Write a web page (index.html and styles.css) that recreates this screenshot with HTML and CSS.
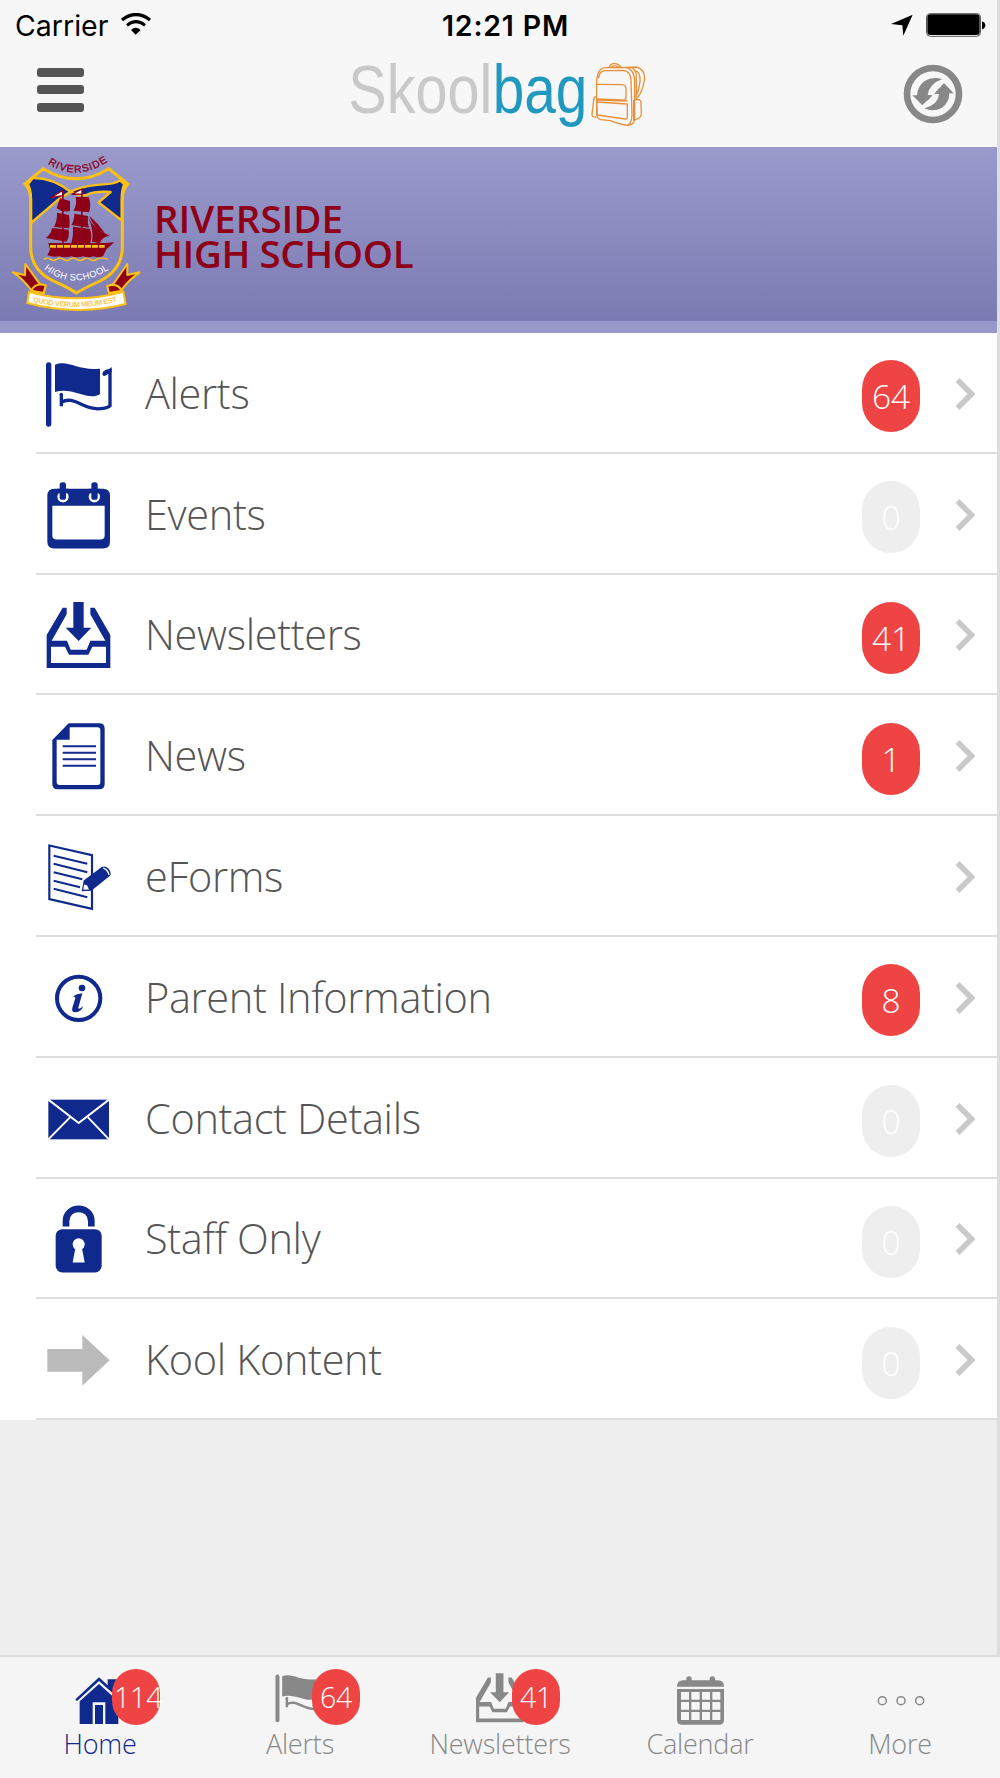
FILE: index.html
```
<!DOCTYPE html>
<html lang="en">
<head>
    <meta charset="UTF-8">
    <meta name="viewport" content="width=device-width, initial-scale=1.0">
    <title>Skoolbag - Riverside High School</title>
    <link rel="stylesheet" href="styles.css">
</head>
<body>

    <div class="screen">

        <header class="header">
            <div class="status">
                <div class="carrier">
                    <span>Carrier</span>
                    <svg width="30" height="22" viewBox="363 38 90 66">
                        <path d="M366 59Q408 26 450 59" fill="none" stroke="#000" stroke-width="10"/>
                        <path d="M381 75Q408 53 435 75" fill="none" stroke="#000" stroke-width="9"/>
                        <path d="M393 89Q407 76 422 89L407 103Z"/>
                    </svg>
                </div>
                <span class="time">12:21 PM</span>
                <div class="power">
                    <svg width="22" height="22" viewBox="1174 42 66 66"><path d="M1174 72L1239 44L1211 107L1208 76Z"/></svg>
                    <svg width="60" height="24" viewBox="1281 38 180 72">
                        <rect x="1282.5" y="40" width="162" height="68" rx="12" fill="#fff" stroke="#555" stroke-width="3"/>
                        <rect x="1285" y="42" width="157" height="62" rx="9"/>
                        <path d="M1449 63Q1459 66 1459 75Q1459 84 1449 87Z"/>
                    </svg>
                </div>
            </div>

            <div class="navbar">
                <div class="menu"><i></i><i></i><i></i></div>

                <svg class="logo" width="305" height="80" viewBox="15 0 915 240">
                    <text class="skool" x="28" y="190" textLength="432" lengthAdjust="spacingAndGlyphs">Skool</text>
                    <text class="bag" x="461" y="190" textLength="284" lengthAdjust="spacingAndGlyphs">bag</text>
                    <g fill="none" stroke="#e8913c" stroke-width="4" stroke-linejoin="round">
                        <path d="M773 145V95Q775 53 800 53L858 52Q884 54 887 90V205Q887 225 866 226Q835 222 815 212L785 209Q772 205 773 185Z"/>
                        <path d="M779 85Q780 62 800 62L852 61Q874 62 876 90L879 195Q878 220 866 226"/>
                        <path d="M812 51Q812 41 827 40Q840 42 847 52M817 51Q827 44 839 51"/>
                        <path d="M858 52L893 51Q917 58 917 87Q910 128 895 143L890 147"/>
                        <path d="M887 62Q905 64 903 95Q899 125 889 143M879 53Q892 61 892 80V140"/>
                        <path d="M773 103L850 104Q860 105 861 115V145Q859 151 850 150L773 147"/>
                        <path d="M773 150L865 153M773 156L865 162V203Q864 208 858 207L775 195Z"/>
                        <path d="M772 140Q765 140 764 150L759 194Q758 201 772 201"/>
                        <path d="M887 150Q900 144 906 155L907 192Q907 205 886 210M884 150V212"/>
                    </g>
                </svg>

                <svg class="refresh" width="60" height="60" viewBox="1208 193 180 180" fill="#888">
                    <circle cx="1298" cy="283" r="78" fill="none" stroke="#888" stroke-width="20"/>
                    <path d="M1325 239Q1297 229 1273 244Q1252 259 1250 287L1236 287L1266 317L1296 287L1282 287Q1286 252 1325 239Z"/>
                    <path d="M1272 326Q1299 338 1325 324Q1347 309 1347 281L1360 281L1331 250L1302 283L1316 283Q1313 315 1272 326Z"/>
                    <path d="M1281 287H1296L1281 304ZM1302 283H1317L1317 265Z"/>
                </svg>
            </div>
        </header>

        <section class="banner">
            <svg class="crest" width="130" height="155" viewBox="36 33 390 465">
                <path id="arcTop" d="M143 56Q229 112 323 50" fill="none"/>
                <path id="arcMid" d="M132 372Q220 441 330 372" fill="none"/>
                <path id="arcLow" d="M98 470Q229 503 360 467" fill="none"/>

                <text class="crest-top"><textPath href="#arcTop" textLength="192">RIVERSIDE</textPath></text>

                <g fill="#0f2a8c" stroke="#fdc013" stroke-width="7" stroke-linejoin="round">
                    <path d="M84 118L98 99Q158 98 211 140L172 166L93 234V160Q93 135 84 118Z"/>
                    <path d="M211 139Q260 120 310 118Q345 117 360 106L373 118Q365 135 365 160V226L296 172L332 141Q290 138 268 146Q245 160 211 139Z"/>
                </g>
                <path d="M75 117L130 71Q228 132 326 71L383 117Q367 135 367 165V305Q367 374 300 408Q252 430 229 444Q205 428 158 407Q92 374 92 305V165Q92 135 75 117Z" fill="none" stroke="#fdc013" stroke-width="9"/>

                <!-- ship -->
                <g fill="#8e0018">
                    <path d="M180 160L210 168V197Q190 205 170 190ZM227 156H266Q275 180 267 202L220 197Q232 180 227 156Z"/>
                    <path d="M171 203L207 210Q211 240 207 250L162 246Q172 226 171 203ZM223 206L264 213Q262 235 267 248L214 240Q223 226 223 206Z"/>
                    <path d="M156 249L206 254Q209 280 198 290L137 279Q154 267 156 249ZM219 245L270 252Q278 275 270 295H214Q221 271 219 245Z"/>
                    <path d="M264 215Q280 253 330 272Q305 275 299 295L276 290Q283 258 264 215ZM268 212Q295 235 315 265Q280 250 268 212Z"/>
                    <path d="M186 140H191V297H186ZM243 135H248V297H243Z"/>
                    <path d="M145 294H315L343 292L320 312L309 333Q295 340 280 334Q265 340 250 334Q230 340 215 334Q195 340 178 334Q160 338 142 331L150 314Z"/>
                </g>
                <path d="M150 304H314" stroke="#fdc013" stroke-width="8" stroke-dasharray="18 3"/>
                <path d="M132 343Q142 336 151 343T170 343T190 343T210 343T230 343T250 343T270 343T290 343T323 342" fill="none" stroke="#fdc013" stroke-width="4"/>
                <path d="M152 158L188 136V152ZM215 148L246 132V147Z" fill="#fff" stroke="#8e0018" stroke-width="4"/>

                <text class="crest-mid"><textPath href="#arcMid" textLength="210">HIGH SCHOOL</textPath></text>

                <g fill="#8e0018" stroke="#fdc013" stroke-width="6" stroke-linejoin="round">
                    <path d="M76 357L120 418L137 422L131 443L95 437Q68 400 39 382L75 391Z"/>
                    <path d="M382 357L340 417L322 424L328 443L362 438Q385 405 419 382L382 390Z"/>
                    <path d="M94 437Q105 412 137 421L131 444ZM365 437Q352 412 322 423L327 444Z"/>
                </g>
                <path d="M87 441Q228 479 370 440L377 477Q229 514 82 474Z" fill="#fff" stroke="#fdc013" stroke-width="6"/>
                <text class="crest-low"><textPath href="#arcLow" textLength="256">QUOD VERUM MEUM EST</textPath></text>
            </svg>
            <h1>RIVERSIDE<br><span>HIGH SCHOOL</span></h1>
        </section>

        <main>
            <ul class="list">
                <li>
                    <svg class="icon" viewBox="132 82 210 210">
                        <g id="flag" fill="currentColor">
                            <rect x="138" y="95" width="16" height="193" rx="8"/>
                            <path d="M165 102C205 86 236 122 300 114V190C268 214 218 168 165 184Z"/>
                            <path d="M184 190V227M184 215C222 192 250 240 301 234Q322 232 330 225V119L315 130" fill="none" stroke="currentColor" stroke-width="10"/>
                            <circle cx="184" cy="191" r="5"/><circle cx="313" cy="130" r="6"/>
                            <path d="M308 125Q315 114 335 115V125L316 133Z"/>
                        </g>
                    </svg>
                    <span class="name">Alerts</span><b class="badge">64</b>
                    <svg class="chevron" viewBox="0 0 20 32"><path d="M2.5 2L16.5 16L2.5 30"/></svg>
                </li>
                <li>
                    <svg class="icon" viewBox="132 444.6 210 210" fill="currentColor">
                        <path fill-rule="evenodd" d="M163 474H309Q330 474 330 495V633Q330 653 309 653H163Q142 653 142 633V495Q142 474 163 474ZM157 525V615Q157 626 170 626H301Q314 626 314 615V525Z"/>
                        <circle cx="189" cy="498" r="17" fill="#fff"/><circle cx="283" cy="498" r="17" fill="#fff"/>
                        <path d="M172 474H206V487H172ZM266 474H300V487H266Z"/>
                        <rect x="179" y="454" width="19" height="53" rx="8"/><rect x="274" y="454" width="19" height="53" rx="8"/>
                    </svg>
                    <span class="name">Events</span><b class="badge zero">0</b>
                    <svg class="chevron" viewBox="0 0 20 32"><path d="M2.5 2L16.5 16L2.5 30"/></svg>
                </li>
                <li>
                    <svg class="icon" viewBox="132 807 210 210">
                        <g id="inbox" fill="currentColor">
                            <path d="M220 816H251V893H274L236 933L197 893H220Z"/>
                            <path fill-rule="evenodd" d="M188 833H200V853L155 932H201L212 959H260L271 932H316L271 853V833H284L331 915V1014H140V915ZM153 950V999H318V950H277L265 974H207L195 950Z"/>
                        </g>
                    </svg>
                    <span class="name">Newsletters</span><b class="badge">41</b>
                    <svg class="chevron" viewBox="0 0 20 32"><path d="M2.5 2L16.5 16L2.5 30"/></svg>
                </li>
                <li>
                    <svg class="icon" viewBox="132 89 210 210" fill="currentColor">
                        <path fill-rule="evenodd" d="M206 99H298Q314 99 314 115V281Q314 297 298 297H173Q157 297 157 281V149ZM209 111V148H170V275Q170 284 179 284H293Q301 284 301 275V120Q301 111 293 111Z"/>
                        <path d="M188 168H288M188 187H288M188 206.500H288M188 226H288" stroke="currentColor" stroke-width="6"/>
                    </svg>
                    <span class="name">News</span><b class="badge">1</b>
                    <svg class="chevron" viewBox="0 0 20 32"><path d="M2.5 2L16.5 16L2.5 30"/></svg>
                </li>
                <li>
                    <svg class="icon" viewBox="132 451.5 210 210">
                        <path d="M148 465L276 494V655L148 626Z" fill="none" stroke="currentColor" stroke-width="6.500"/>
                        <path d="M161 496L262 520M161 520L262 545M161 545L247 566M161 571L240 590M161 595L262 620" stroke="currentColor" stroke-width="6"/>
                        <path d="M251 570L304 530Q315 524 325 534Q336 548 330 556L274 601L245 602Z" fill="currentColor"/>
                        <path d="M252 582L261 584L267 597L250 598Z" fill="#fff"/>
                        <path d="M310 532Q325 540 327 553" fill="none" stroke="#fff" stroke-width="4"/>
                    </svg>
                    <span class="name">eForms</span>
                    <svg class="chevron" viewBox="0 0 20 32"><path d="M2.5 2L16.5 16L2.5 30"/></svg>
                </li>
                <li>
                    <svg class="icon" viewBox="132 814 210 210">
                        <circle cx="236" cy="923" r="65" fill="none" stroke="currentColor" stroke-width="12"/>
                        <circle cx="246" cy="892" r="10" fill="currentColor"/>
                        <path d="M217 918Q230 909 247 908L235 951Q235 959 250 946Q243 965 224 965Q214 964 217 951L226 922Q225 916 217 918Z" fill="currentColor"/>
                    </svg>
                    <span class="name">Parent Information</span><b class="badge">8</b>
                    <svg class="chevron" viewBox="0 0 20 32"><path d="M2.5 2L16.5 16L2.5 30"/></svg>
                </li>
                <li>
                    <svg class="icon" viewBox="132 96 210 210">
                        <rect x="145" y="146" width="182" height="119" fill="currentColor"/>
                        <path d="M145 146L236 216L327 146M145 265L210 199M327 265L264 199" fill="none" stroke="#fff" stroke-width="6"/>
                    </svg>
                    <span class="name">Contact Details</span><b class="badge zero">0</b>
                    <svg class="chevron" viewBox="0 0 20 32"><path d="M2.5 2L16.5 16L2.5 30"/></svg>
                </li>
                <li>
                    <svg class="icon" viewBox="132 458.5 210 210">
                        <path d="M198 529V513C198 464 274 464 274 513V529" fill="none" stroke="currentColor" stroke-width="20"/>
                        <rect x="167" y="537" width="138" height="130" rx="20" fill="currentColor"/>
                        <circle cx="236" cy="582" r="18" fill="#fff"/>
                        <path d="M227 590H245L254 637H218Z" fill="#fff"/>
                    </svg>
                    <span class="name">Staff Only</span><b class="badge zero">0</b>
                    <svg class="chevron" viewBox="0 0 20 32"><path d="M2.5 2L16.5 16L2.5 30"/></svg>
                </li>
                <li>
                    <svg class="icon" viewBox="132 821 210 210"><path d="M142 896H247V854L329 930L247 1006V964H142Z" fill="#bbb"/></svg>
                    <span class="name">Kool Kontent</span><b class="badge zero">0</b>
                    <svg class="chevron" viewBox="0 0 20 32"><path d="M2.5 2L16.5 16L2.5 30"/></svg>
                </li>
            </ul>
        </main>
    </div>

    <nav class="tabs">
        <a class="tab active">
            <svg viewBox="222 99 156 156" fill="currentColor">
                <path d="M227 177L297 112L323 136V118H349V159L370 178L365 184L297 123L232 182Q225 183 227 177Z"/>
                <path d="M239 184L297 132L355 184V252H316V187H278V252H239Z"/>
                <rect x="285" y="195" width="24" height="57"/>
            </svg>
            <span>Home</span><b>114</b>
        </a>
        <a class="tab">
            <svg viewBox="132 89 210 210"><use href="#flag"/></svg>
            <span>Alerts</span><b>64</b>
        </a>
        <a class="tab">
            <svg viewBox="132 815 210 210"><use href="#inbox"/></svg>
            <span>Newsletters</span><b>41</b>
        </a>
        <a class="tab">
            <svg viewBox="522 99 156 156" fill="currentColor">
                <path d="M531 140Q531 121 550 121H559V113Q567 105 575 113V121H629V113Q637 105 645 113V121H653Q672 121 672 140Z"/>
                <path d="M531 147H672V239Q672 254 657 254H546Q531 254 531 239Z"/>
                <path d="M543 156H567V179H543ZM574 156H599V179H574ZM606 156H630V179H606ZM637 156H661V179H637ZM543 186H567V209H543ZM574 186H599V209H574ZM606 186H630V209H606ZM637 186H661V209H637ZM543 216H567V240H543ZM574 216H599V240H574ZM606 216H630V240H606ZM637 216H661V240H637Z" fill="#f5f5f5"/>
            </svg>
            <span>Calendar</span>
        </a>
        <a class="tab">
            <svg viewBox="1122 99 156 156" fill="none" stroke="currentColor" stroke-width="4.5">
                <circle cx="1147" cy="182" r="12"/><circle cx="1203" cy="182" r="12"/><circle cx="1259" cy="182" r="12"/>
            </svg>
            <span>More</span>
        </a>
    </nav>

</body>
</html>
```
FILE: styles.css
```
*{
    box-sizing: border-box;
}

body{
    margin: 0;
    height: 1778px;
    display: flex;
    flex-direction: column;
    overflow: hidden;
    background-color: #eee;
    font-family: "Open Sans", sans-serif;
    font-weight: 300;
    color: #555;
}

svg{
    display: block;
    flex: none;
}

.screen{
    flex: 1;
    border-right: 3px solid #ddd;
}

/* top bar */

.header{
    height: 147px;
    background-color: #f7f7f7;
}

.status{
    height: 50px;
    padding: 0 11px 0 15px;
    display: grid;
    grid-template-columns: 1fr auto 1fr;
    align-items: center;
    font-family: Inter, sans-serif;
    font-size: 28.5px;
    font-weight: 400;
    color: #000;
}

.carrier{
    display: flex;
    align-items: center;
    gap: 13px;
}

.carrier svg{
    margin-bottom: 3px;
}

.time{
    font-weight: 600;
    letter-spacing: 0.8px;
    margin-left: 10px;
}

.power{
    display: flex;
    justify-content: flex-end;
    align-items: center;
    gap: 13px;
}

.navbar{
    display: grid;
    grid-template-columns: 1fr auto 1fr;
    align-items: start;
    padding: 0 34px 0 30px;
}

.menu{
    display: flex;
    flex-direction: column;
    gap: 8.5px;
    padding: 17.5px 0 0 7px;
}

.menu i{
    width: 47px;
    height: 9px;
    border-radius: 3px;
    background-color: #555;
}

.skool, .bag{
    font-family: "Liberation Sans", Arial, sans-serif;
    font-size: 203px;
    font-weight: 400;
    fill: #c9c9c9;
}

.bag{
    fill: #2199bf;
}

.refresh{
    margin-top: 14px;
    justify-self: end;
}

/* school banner */

.banner{
    height: 186px;
    display: flex;
    align-items: flex-start;
    padding: 9px 0 0 12px;
    border-bottom: 12px solid #9898c9;
    background: linear-gradient(#9a9acb, #7b7bb3);
}

.banner h1{
    margin: 45px 0 0 12px;
    font-size: 38.5px;
    line-height: 35px;
    font-weight: 600;
    color: #8e0018;
}

.banner h1 span{
    letter-spacing: -0.4px;
}

.crest text{
    font-family: "Liberation Sans", Arial, sans-serif;
    font-weight: 400;
}

.crest .crest-top{
    font-size: 31px;
    fill: #8e0018;
    stroke: #8e0018;
    stroke-width: 1;
}

.crest .crest-mid{
    font-size: 28px;
    fill: #fff;
}

.crest .crest-low{
    font-size: 22px;
    font-weight: bold;
    fill: #fbc94a;
}

/* menu list */

.list{
    list-style: none;
    margin: 0;
    padding: 0 0 0 36px;
    background-color: #fff;
}

.list li{
    height: 120.8px;
    display: flex;
    align-items: center;
    padding: 1px 22px 0 8px;
    border-bottom: 2px solid #ddd;
}

.icon{
    width: 70px;
    height: 70px;
    color: #0f2a8c;
}

.name{
    flex: 1;
    margin-left: 31px;
    font-size: 41.5px;
    letter-spacing: -0.35px;
}

.badge{
    width: 58px;
    height: 72px;
    line-height: 72px;
    margin: 7px 35px 0 0;
    border-radius: 29px;
    background-color: #ef4444;
    color: #fff;
    text-align: center;
    font-size: 33.5px;
    font-weight: 300;
}

.zero{
    background-color: #eee;
}

.chevron{
    width: 20px;
    height: 32px;
    margin-top: 2px;
}

.chevron path{
    fill: none;
    stroke: #c9c9c9;
    stroke-width: 5.5;
}

/* bottom tabs */

.tabs{
    height: 123px;
    display: grid;
    grid-template-columns: repeat(5, 1fr);
    border-top: 2px solid #ddd;
    background-color: #f5f5f5;
}

.tab{
    position: relative;
    display: flex;
    flex-direction: column;
    align-items: center;
    padding-top: 16px;
    font-size: 27px;
    letter-spacing: -0.2px;
    line-height: 38px;
    color: #888;
}

.tab svg{
    width: 52px;
    height: 52px;
}

.active{
    color: #0f2a8c;
}

.tab b{
    position: absolute;
    left: 112px;
    top: 12px;
    width: 48px;
    height: 56px;
    line-height: 57px;
    padding: 0 2px;
    border-radius: 24px;
    background-color: #ef4444;
    color: #fff;
    text-align: center;
    font-size: 28.5px;
    font-weight: 300;
}
```
